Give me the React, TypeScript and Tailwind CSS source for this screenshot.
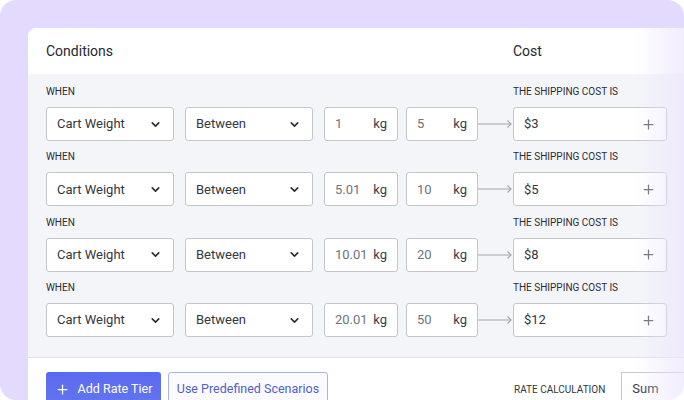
import { ChevronDown, Plus } from 'lucide-react';

const tiers = [
  { from: '1', to: '5', cost: '$3' },
  { from: '5.01', to: '10', cost: '$5' },
  { from: '10.01', to: '20', cost: '$8' },
  { from: '20.01', to: '50', cost: '$12' },
];

function SelectBox({ label }: { label: string }) {
  return (
    <div className="flex h-[34px] w-[128px] items-center justify-between rounded-[3px] border border-[#c5c6cc] bg-white pl-[10px] pr-[11px]">
      <span className="text-[13px] text-[#34373e]">{label}</span>
      <ChevronDown size={13} strokeWidth={3} className="text-[#2b2f36]" />
    </div>
  );
}

function KgInput({ value, width }: { value: string; width: string }) {
  return (
    <div className={`flex h-[34px] ${width} items-center justify-between rounded-[3px] border border-[#c5c6cc] bg-white pl-[10px] pr-[10px]`}>
      <span className="text-[13px] text-[#6f737b]">{value}</span>
      <span className="text-[13px] text-[#3a3e46]">kg</span>
    </div>
  );
}

function Arrow() {
  return (
    <svg width="35" height="34" viewBox="0 0 35 34" className="shrink-0">
      <path d="M0 17 H33" stroke="#a3a6ad" strokeWidth="1.2" fill="none" />
      <path d="M29.5 13.5 L33 17 L29.5 20.5" stroke="#a3a6ad" strokeWidth="1.2" fill="none" />
    </svg>
  );
}

export default function App() {
  return (
    <div
      className="h-[400px] w-[684px] overflow-hidden bg-white"
      style={{ fontFamily: 'Roboto, "Noto Sans", sans-serif' }}
    >
      <div className="flex h-full w-full overflow-hidden rounded-[16px] bg-[#e4dafd] pl-[28px] pt-[28px]">
        <div className="relative flex flex-1 flex-col overflow-hidden rounded-tl-[8px] bg-white">
          {/* header */}
          <div className="flex h-[46px] shrink-0 items-center pl-[18px]">
            <div className="w-[467px] text-[14px] text-[#25282e]">Conditions</div>
            <div className="text-[14px] text-[#25282e]">Cost</div>
          </div>

          {/* tiers */}
          <div className="flex flex-col gap-[10.4px] border-b border-[#e2e3e8] bg-[#f4f5f9] pb-[20px] pl-[18px] pt-[12px]">
            {tiers.map((t) => (
              <div key={t.cost} className="flex flex-col">
                <div className="flex h-[12px] items-center text-[10px] leading-3 text-[#2a2d33]">
                  <span className="w-[467px]">WHEN</span>
                  <span>THE SHIPPING COST IS</span>
                </div>
                <div className="mt-[9px] flex items-center">
                  <SelectBox label="Cart Weight" />
                  <div className="ml-[11px]">
                    <SelectBox label="Between" />
                  </div>
                  <div className="ml-[11px]">
                    <KgInput value={t.from} width="w-[74px]" />
                  </div>
                  <div className="ml-[8px]">
                    <KgInput value={t.to} width="w-[72px]" />
                  </div>
                  <Arrow />
                  <div className="flex h-[34px] w-[154px] items-center justify-between rounded-[3px] border border-[#c5c6cc] bg-white pl-[10px] pr-[10px]">
                    <span className="text-[13px] text-[#34373e]">{t.cost}</span>
                    <Plus size={15} strokeWidth={2} className="text-[#5c6068]" />
                  </div>
                </div>
              </div>
            ))}
          </div>

          {/* footer */}
          <div className="flex items-start pl-[18px] pt-[14px]">
            <button className="flex h-[34px] w-[115px] items-center justify-center gap-[8px] rounded-[3px] bg-gradient-to-b from-[#5a6aef] to-[#6475ee] text-[12.5px] text-white">
              <Plus size={15} strokeWidth={2} />
              Add Rate Tier
            </button>
            <button className="ml-[7px] flex h-[34px] w-[160px] items-center justify-center rounded-[3px] border border-[#aab2ec] bg-[#fbfbff] text-[12.5px] text-[#5061c9]">
              Use Predefined Scenarios
            </button>
            <div className="ml-[186px] flex h-[34px] items-center text-[10px] text-[#33373e]">
              RATE CALCULATION
            </div>
            <div className="ml-[16px] flex h-[34px] flex-1 items-center border border-r-0 border-[#c5c6cc] bg-white pl-[10px] text-[13px] text-[#34373e]">
              Sum
            </div>
          </div>

          {/* fade at right edge */}
          <div className="pointer-events-none absolute bottom-0 right-0 top-0 w-[50px] bg-gradient-to-r from-transparent to-[#ebe5fd]/70" />
        </div>
      </div>
    </div>
  );
}
